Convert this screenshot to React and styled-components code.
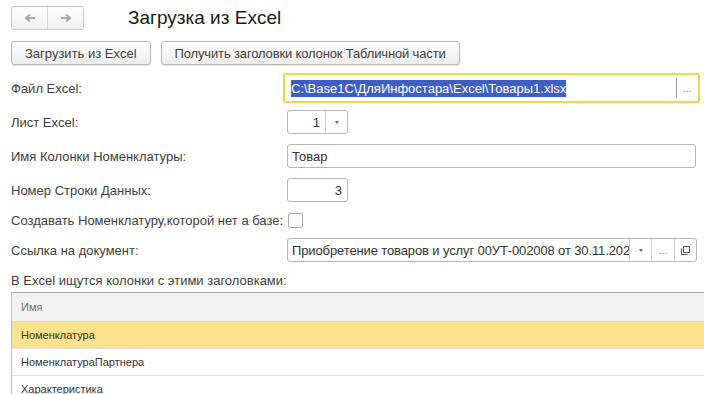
import React from "react";
import styled, { createGlobalStyle } from "styled-components";

const GlobalStyle = createGlobalStyle`
  body {
    margin: 0;
    background: #fff;
    font-family: "Liberation Sans", Arial, sans-serif;
  }
`;

const Page = styled.div`
  width: 704px;
  height: 394px;
  overflow: hidden;
  padding-left: 11px;
  box-sizing: border-box;
  color: #404040;
  font-size: 13px;
`;

const TopBar = styled.div`
  display: flex;
  align-items: center;
  height: 24px;
  margin-top: 6px;
`;

const NavGroup = styled.div`
  display: flex;
  width: 73px;
  height: 24px;
  box-sizing: border-box;
  border: 1px solid #c8c8c8;
  border-radius: 3px;
  background: linear-gradient(#ffffff, #f0f0f0);
`;

const NavButton = styled.div`
  flex: 1;
  display: flex;
  align-items: center;
  justify-content: center;
  & + & {
    border-left: 1px solid #d8d8d8;
  }
`;

const Title = styled.h1`
  margin: 0 0 0 44px;
  font-size: 19px;
  font-weight: normal;
  color: #1a1a1a;
  line-height: 24px;
`;

const Toolbar = styled.div`
  display: flex;
  gap: 10px;
  margin-top: 11px;
`;

const Button = styled.div`
  height: 24px;
  box-sizing: border-box;
  padding: 0 13px;
  display: flex;
  align-items: center;
  border: 1px solid #b8b8b8;
  border-radius: 3px;
  background: linear-gradient(#ffffff, #ececec);
  box-shadow: 0 1px 1px rgba(0, 0, 0, 0.12);
  color: #404040;
  white-space: nowrap;
  letter-spacing: ${(p) => p.$ls || 0}px;
`;

const Form = styled.div`
  display: flex;
  flex-direction: column;
  margin-top: 8px;
`;

const Row = styled.div`
  display: flex;
  align-items: center;
  height: ${(p) => p.$h || 24}px;
  margin-top: ${(p) => p.$top || 0}px;
`;

const Label = styled.div`
  width: 276px;
  flex-shrink: 0;
  white-space: nowrap;
`;

const FocusFrame = styled.div`
  display: flex;
  align-items: stretch;
  width: 417px;
  height: 30px;
  margin-left: -4px;
  box-sizing: border-box;
  border: 2px solid #f3d448;
  border-radius: 3px;
  background: #fff;
`;

const Field = styled.div`
  display: flex;
  align-items: stretch;
  width: ${(p) => p.$w}px;
  height: 24px;
  box-sizing: border-box;
  border: 1px solid #b5b5b5;
  border-radius: 3px;
  background: #fff;
  overflow: hidden;
`;

const Value = styled.div`
  flex: 1;
  min-width: 0;
  display: flex;
  align-items: center;
  justify-content: ${(p) => (p.$right ? "flex-end" : "flex-start")};
  padding: 0 ${(p) => (p.$right ? 5 : 2)}px 0 ${(p) => (p.$pad ?? 4)}px;
  color: #333;
  white-space: nowrap;
  overflow: hidden;
  font-size: 13px;
  letter-spacing: ${(p) => p.$ls || 0}px;
`;

const Selected = styled.span`
  background: #3e5ec6;
  color: #fff;
  line-height: 17px;
`;

const FieldButton = styled.div`
  width: ${(p) => p.$w || 21}px;
  flex-shrink: 0;
  display: flex;
  align-items: center;
  justify-content: center;
  border-left: 1px solid ${(p) => p.$line || "#d0d0d0"};
  color: #888;
  font-size: 11px;
  margin: ${(p) => (p.$inset ? "3px 0" : "0")};
`;

const Arrow = styled.span`
  width: 0;
  height: 0;
  border-left: 2.5px solid transparent;
  border-right: 2.5px solid transparent;
  border-top: 3px solid #666;
`;

const Checkbox = styled.div`
  width: 15px;
  height: 15px;
  margin-left: 1px;
  box-sizing: border-box;
  border: 1px solid #a8a8a8;
  border-radius: 2px;
  background: #fff;
`;

const Caption = styled.div`
  margin-top: 11px;
  line-height: 16px;
  white-space: nowrap;
`;

const Table = styled.div`
  margin-top: 3px;
  border-top: 1px solid #a8a8a8;
  border-left: 1px solid #c0c0c0;
`;

const HeaderCell = styled.div`
  height: 28px;
  display: flex;
  align-items: center;
  padding-left: 9px;
  background: #f2f2f2;
  border-bottom: 1px solid #d6d6d6;
  color: #707070;
  font-size: 11px;
`;

const Cell = styled.div`
  height: 26px;
  display: flex;
  align-items: center;
  padding-left: 9px;
  background: ${(p) => (p.$active ? "#fbe28c" : "#fff")};
  border-bottom: 1px solid #e2e2e2;
  color: #333;
  font-size: 11px;
`;

const ArrowIcon = ({ dir }) => (
  <svg width="12" height="10" viewBox="0 0 12 10">
    <path
      d={dir === "left" ? "M11 5H3M6 1.5L2 5l4 3.5" : "M1 5h8M6 1.5L10 5 6 8.5"}
      fill="none"
      stroke="#a8a8a8"
      strokeWidth="2"
    />
  </svg>
);

const OpenIcon = () => (
  <svg width="11" height="11" viewBox="0 0 11 11">
    <path d="M3.5 1.5h6v6h-6z" fill="none" stroke="#555" strokeWidth="1" />
    <path d="M1.5 3.5v6h6" fill="none" stroke="#555" strokeWidth="1" />
  </svg>
);

const columns = ["Номенклатура", "НоменклатураПартнера", "Характеристика"];

export default function App() {
  return (
    <>
      <GlobalStyle />
      <Page>
        <TopBar>
          <NavGroup>
            <NavButton>
              <ArrowIcon dir="left" />
            </NavButton>
            <NavButton>
              <ArrowIcon dir="right" />
            </NavButton>
          </NavGroup>
          <Title>Загрузка из Excel</Title>
        </TopBar>

        <Toolbar>
          <Button>Загрузить из Excel</Button>
          <Button $ls={-0.15}>Получить заголовки колонок Табличной части</Button>
        </Toolbar>

        <Form>
          <Row $h={30}>
            <Label>Файл Excel:</Label>
            <FocusFrame>
              <Value $pad={6}>
                <Selected>C:\Base1C\ДляИнфостара\Excel\Товары1.xlsx</Selected>
              </Value>
              <FieldButton $w={21} $line="#999" $inset>
                ...
              </FieldButton>
            </FocusFrame>
          </Row>
          <Row $top={7}>
            <Label>Лист Excel:</Label>
            <Field $w={61}>
              <Value $right>1</Value>
              <FieldButton>
                <Arrow />
              </FieldButton>
            </Field>
          </Row>
          <Row $top={10}>
            <Label>Имя Колонки Номенклатуры:</Label>
            <Field $w={409}>
              <Value>Товар</Value>
            </Field>
          </Row>
          <Row $top={10}>
            <Label>Номер Строки Данных:</Label>
            <Field $w={61}>
              <Value $right>3</Value>
            </Field>
          </Row>
          <Row $top={10} $h={16}>
            <Label>Создавать Номенклатуру,которой нет а базе:</Label>
            <Checkbox />
          </Row>
          <Row $top={10}>
            <Label>Ссылка на документ:</Label>
            <Field $w={410}>
              <Value $ls={-0.12}>Приобретение товаров и услуг 00УТ-002008 от 30.11.202</Value>
              <FieldButton>
                <Arrow />
              </FieldButton>
              <FieldButton $w={22}>...</FieldButton>
              <FieldButton>
                <OpenIcon />
              </FieldButton>
            </Field>
          </Row>
        </Form>

        <Caption>В Excel ищутся колонки с этими заголовками:</Caption>

        <Table>
          <HeaderCell>Имя</HeaderCell>
          {columns.map((name, i) => (
            <Cell key={name} $active={i === 0}>
              {name}
            </Cell>
          ))}
        </Table>
      </Page>
    </>
  );
}
